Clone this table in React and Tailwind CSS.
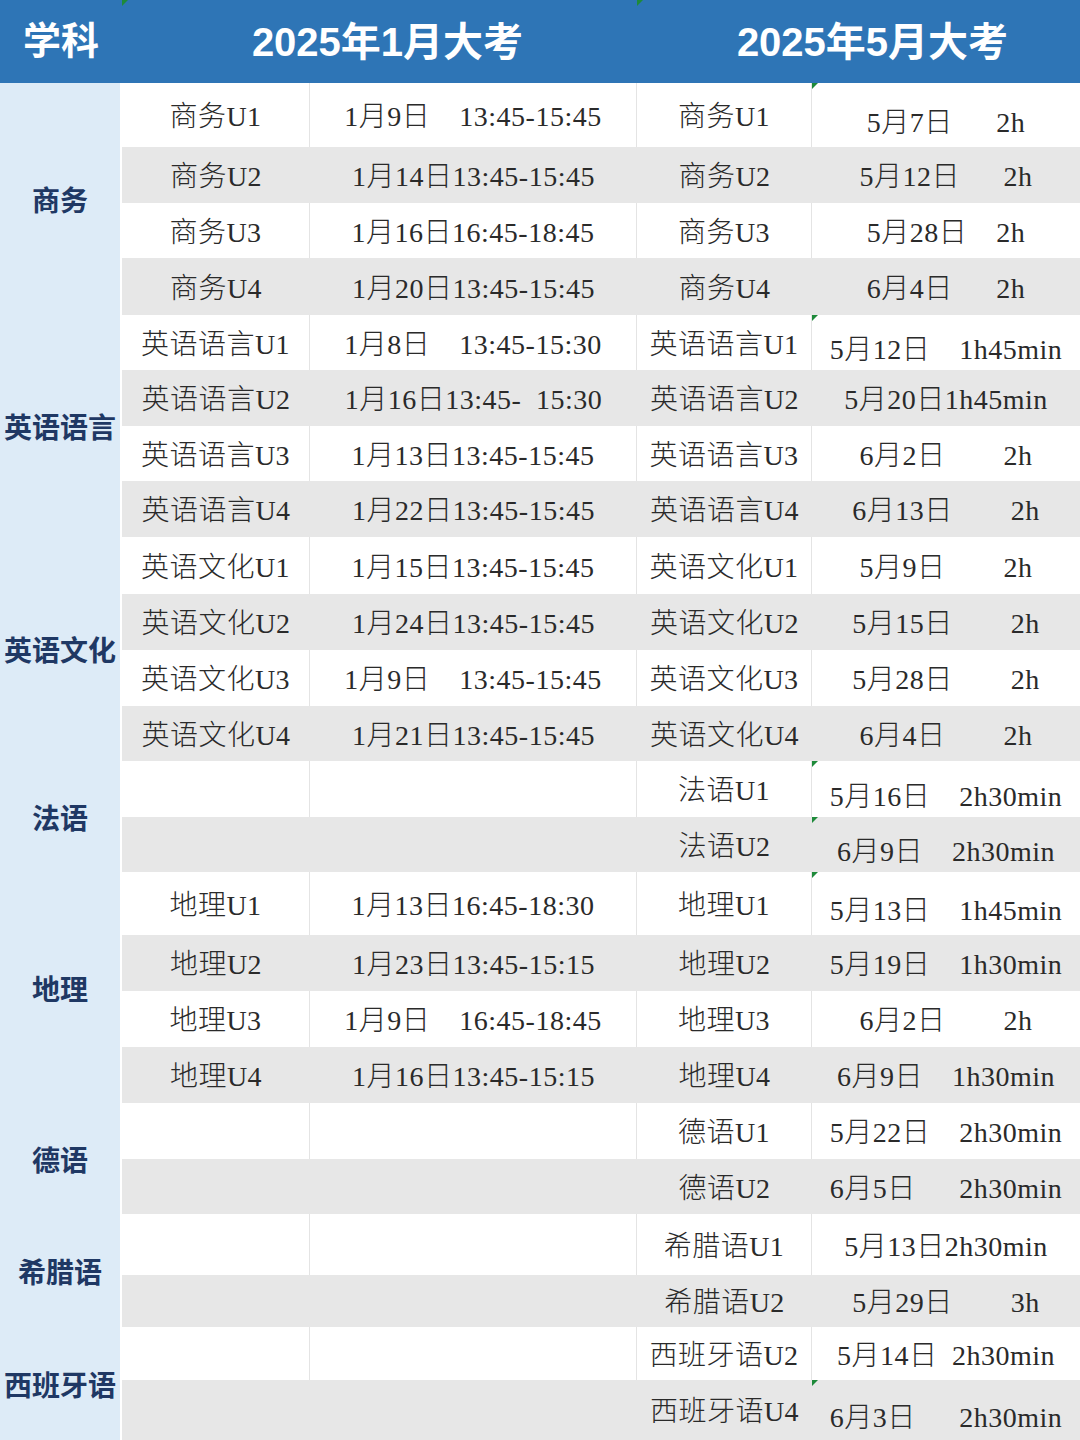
import React from 'react';

const SP = '\u2002';
const s = (n) => SP.repeat(n);

// rows: [jan unit, jan time, may unit, may time, lowMay]
const groups = [
  {
    name: '商务',
    rows: [
      ['商务U1', `1月9日${s(2)}13:45-15:45`, '商务U1', `5月7日${s(3)}2h`, true],
      ['商务U2', '1月14日13:45-15:45', '商务U2', `5月12日${s(3)}2h`],
      ['商务U3', '1月16日16:45-18:45', '商务U3', `5月28日${s(2)}2h`],
      ['商务U4', '1月20日13:45-15:45', '商务U4', `6月4日${s(3)}2h`],
    ],
  },
  {
    name: '英语语言',
    rows: [
      ['英语语言U1', `1月8日${s(2)}13:45-15:30`, '英语语言U1', `5月12日${s(2)}1h45min`, true],
      ['英语语言U2', `1月16日13:45-${s(1)}15:30`, '英语语言U2', '5月20日1h45min'],
      ['英语语言U3', '1月13日13:45-15:45', '英语语言U3', `6月2日${s(4)}2h`],
      ['英语语言U4', '1月22日13:45-15:45', '英语语言U4', `6月13日${s(4)}2h`],
    ],
  },
  {
    name: '英语文化',
    rows: [
      ['英语文化U1', '1月15日13:45-15:45', '英语文化U1', `5月9日${s(4)}2h`],
      ['英语文化U2', '1月24日13:45-15:45', '英语文化U2', `5月15日${s(4)}2h`],
      ['英语文化U3', `1月9日${s(2)}13:45-15:45`, '英语文化U3', `5月28日${s(4)}2h`],
      ['英语文化U4', '1月21日13:45-15:45', '英语文化U4', `6月4日${s(4)}2h`],
    ],
  },
  {
    name: '法语',
    rows: [
      ['', '', '法语U1', `5月16日${s(2)}2h30min`, true],
      ['', '', '法语U2', `6月9日${s(2)}2h30min`, true],
    ],
  },
  {
    name: '地理',
    rows: [
      ['地理U1', '1月13日16:45-18:30', '地理U1', `5月13日${s(2)}1h45min`, true],
      ['地理U2', '1月23日13:45-15:15', '地理U2', `5月19日${s(2)}1h30min`],
      ['地理U3', `1月9日${s(2)}16:45-18:45`, '地理U3', `6月2日${s(4)}2h`],
      ['地理U4', '1月16日13:45-15:15', '地理U4', `6月9日${s(2)}1h30min`],
    ],
  },
  {
    name: '德语',
    rows: [
      ['', '', '德语U1', `5月22日${s(2)}2h30min`],
      ['', '', '德语U2', `6月5日${s(3)}2h30min`],
    ],
  },
  {
    name: '希腊语',
    rows: [
      ['', '', '希腊语U1', '5月13日2h30min'],
      ['', '', '希腊语U2', `5月29日${s(4)}3h`],
    ],
  },
  {
    name: '西班牙语',
    rows: [
      ['', '', '西班牙语U2', `5月14日${s(1)}2h30min`],
      ['', '', '西班牙语U4', `6月3日${s(3)}2h30min`, true],
    ],
  },
];

const spanClass = { 2: 'row-span-2', 4: 'row-span-4' };

// little green comment marker in the corner of a cell
function Tick() {
  return (
    <span className="absolute left-0 top-0 w-0 h-0 border-t-[6px] border-r-[6px] border-t-[#1e8a3a] border-r-transparent" />
  );
}

function Cell({ text, white, last, low, tick }) {
  return (
    <div
      className={`relative flex items-center justify-center whitespace-pre text-[28px] leading-none tracking-[0.5px] text-[#2a2a2a] ${
        white ? 'bg-white' : 'bg-[#e7e7e7]'
      } ${white && !last ? 'border-r border-[#e4e4e4]' : ''} ${low ? 'pt-[15px]' : 'pt-[4px]'}`}
    >
      {tick && <Tick />}
      {text}
    </div>
  );
}

export default function App() {
  let idx = 0;
  return (
    <div className="w-[1080px] h-[1440px] overflow-hidden bg-white grid grid-cols-[122px_188px_327px_175px_268px] grid-rows-[83px_64px_56px_55px_57px_55px_56px_55px_56px_57px_56px_56px_55px_56px_55px_63px_56px_56px_56px_56px_55px_61px_52px_53px_60px] font-['Liberation_Serif','Noto_Sans_CJK_SC',serif] font-light">
      {/* header */}
      <div className="relative bg-[#2e75b6] flex items-center justify-center text-white text-[38px] font-bold font-['Liberation_Sans','Noto_Sans_CJK_SC',sans-serif]">
        学科
      </div>
      <div className="relative col-span-2 bg-[#2e75b6] flex items-center justify-center text-white text-[40px] font-bold pl-[16px] font-['Liberation_Sans','Noto_Sans_CJK_SC',sans-serif]">
        <Tick />
        2025年1月大考
      </div>
      <div className="relative col-span-2 bg-[#2e75b6] flex items-center justify-center text-white text-[40px] font-bold pl-[28px] font-['Liberation_Sans','Noto_Sans_CJK_SC',sans-serif]">
        <Tick />
        2025年5月大考
      </div>

      {groups.map((g) => (
        <React.Fragment key={g.name}>
          <div
            className={`${spanClass[g.rows.length]} bg-[#ddebf7] flex items-center justify-center text-[28px] font-bold text-[#1f3864] border-r-2 border-white font-['Noto_Sans_CJK_SC',sans-serif]`}
          >
            {g.name}
          </div>
          {g.rows.map((r) => {
            const white = idx % 2 === 0;
            idx += 1;
            return (
              <React.Fragment key={r[2]}>
                <Cell text={r[0]} white={white} />
                <Cell text={r[1]} white={white} />
                <Cell text={r[2]} white={white} />
                <Cell text={r[3]} white={white} last low={r[4]} tick={r[4]} />
              </React.Fragment>
            );
          })}
        </React.Fragment>
      ))}
    </div>
  );
}
